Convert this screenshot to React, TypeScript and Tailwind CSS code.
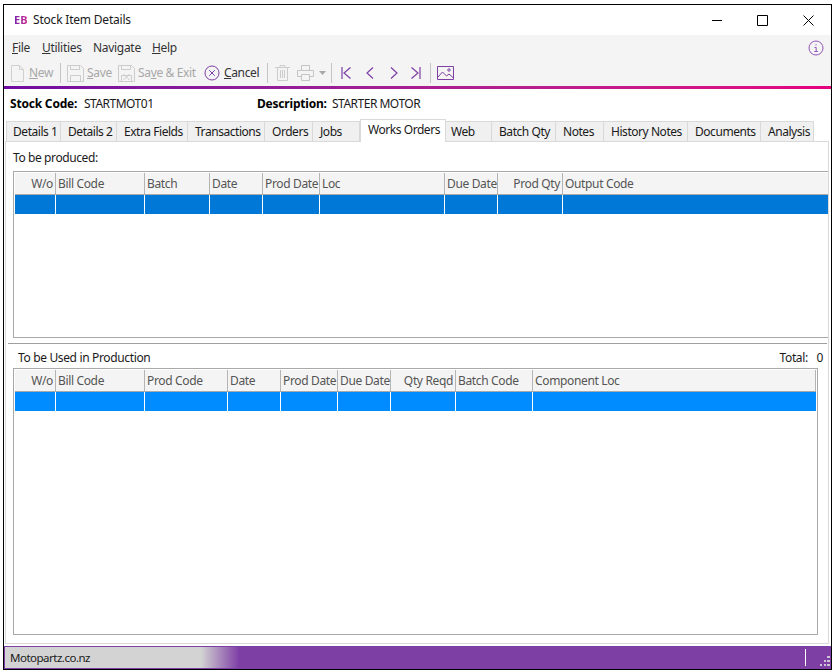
const FONT = "font-['Noto_Sans','Open_Sans',sans-serif]";

interface Col {
  label: string;
  w: string;
  right?: boolean;
}

const TOP_COLS: Col[] = [
  { label: "W/o", w: "w-[41px]", right: true },
  { label: "Bill Code", w: "w-[89px]" },
  { label: "Batch", w: "w-[65px]" },
  { label: "Date", w: "w-[53px]" },
  { label: "Prod Date", w: "w-[57px]" },
  { label: "Loc", w: "w-[125px]" },
  { label: "Due Date", w: "w-[53px]" },
  { label: "Prod Qty", w: "w-[65px]", right: true },
  { label: "Output Code", w: "flex-1 border-r-0!" },
];

const BOTTOM_COLS: Col[] = [
  { label: "W/o", w: "w-[41px]", right: true },
  { label: "Bill Code", w: "w-[89px]" },
  { label: "Prod Code", w: "w-[83px]" },
  { label: "Date", w: "w-[53px]" },
  { label: "Prod Date", w: "w-[57px]" },
  { label: "Due Date", w: "w-[53px]" },
  { label: "Qty Reqd", w: "w-[65px]", right: true },
  { label: "Batch Code", w: "w-[77px]" },
  { label: "Component Loc", w: "flex-1" },
];

const TABS = [
  { label: "Details 1", w: "w-[55px]" },
  { label: "Details 2", w: "w-[56px]" },
  { label: "Extra Fields", w: "w-[71px]" },
  { label: "Transactions", w: "w-[77px]" },
  { label: "Orders", w: "w-[48px]" },
  { label: "Jobs", w: "w-[47px]" },
  { label: "Works Orders", w: "w-[86px]", active: true },
  { label: "Web", w: "w-[46px] pl-[5px]!" },
  { label: "Batch Qty", w: "w-[64px]" },
  { label: "Notes", w: "w-[48px]" },
  { label: "History Notes", w: "w-[84px]" },
  { label: "Documents", w: "w-[73px]" },
  { label: "Analysis", w: "w-[53px]" },
];

function Grid({ cols, selected, size }: { cols: Col[]; selected: string; size: string }) {
  return (
    <div className={`${size} border border-[#a9a9a9] pt-px pl-px bg-white`}>
      <div className="flex h-[22px] bg-[#f4f4f4] border-b border-[#a9a9a9]">
        {cols.map((c) => (
          <div
            key={c.label}
            className={`${c.w} flex items-center pt-px px-[2px] border-r border-[#b4b4b4] whitespace-nowrap tracking-[-0.35px] text-[#555] ${c.right ? "justify-end" : ""}`}
          >
            {c.label}
          </div>
        ))}
      </div>
      <div className="flex h-[19px]">
        {cols.map((c) => (
          <div key={c.label} className={`${c.w} ${selected} border-r border-white last:border-r-0`} />
        ))}
      </div>
    </div>
  );
}

function Sep() {
  return <div className="w-px h-[20px] bg-[#c4c4c4]" />;
}

function PageIcon() {
  return (
    <svg width="14" height="17" viewBox="0 0 14 17" fill="none" stroke="#d0d0d0">
      <path d="M.5.5h8l4 4v12H.5z M8.5.5v4h4" />
    </svg>
  );
}

function SaveIcon({ cross }: { cross?: boolean }) {
  return (
    <svg width="17" height="17" viewBox="0 0 17 17" fill="none" stroke="#cccccc">
      <path d="M.5.5h13l3 3v13H.5z" />
      <path d="M3.5.5v4h9v-4" />
      <path d="M3.5 16.5v-6h10v6" />
      {cross && <path d="M5.5 9l6 6M11.5 9l-6 6" />}
    </svg>
  );
}

function NavIcon({ d }: { d: string }) {
  return (
    <svg width="11" height="12" viewBox="0 0 11 12" fill="none" stroke="#7e3fa5" strokeWidth="1.2">
      <path d={d} />
    </svg>
  );
}

export default function App() {
  return (
    <div className={`w-[833px] h-[672px] bg-white pl-[3px] pt-[4px] text-[12px] leading-[16px] text-[#1a1a1a] ${FONT}`}>
      <div className="w-[829px] h-[666px] border border-black flex flex-col bg-white">
        {/* title bar */}
        <div className="h-[30px] flex items-center shrink-0">
          <span className="ml-[10px] w-[19px] font-['Liberation_Sans',sans-serif] text-[11px] font-bold bg-linear-to-r from-[#7a1fb0] to-[#f0007e] bg-clip-text text-transparent">
            EB
          </span>
          <span className="tracking-[-0.2px]">Stock Item Details</span>
          <div className="ml-auto flex items-center">
            <svg width="11" height="11" viewBox="0 0 11 11" stroke="#000" fill="none">
              <path d="M0 5.5h10" />
            </svg>
            <svg className="ml-[34px]" width="11" height="11" viewBox="0 0 11 11" stroke="#000" fill="none">
              <path d="M.5.5h10v10H.5z" />
            </svg>
            <svg className="ml-[35px] mr-[17px]" width="11" height="11" viewBox="0 0 11 11" stroke="#000" fill="none">
              <path d="M.5.5l10 10M10.5.5l-10 10" />
            </svg>
          </div>
        </div>

        {/* menu bar */}
        <div className="h-[25px] bg-[#f4f4f4] flex items-center pl-[8px] shrink-0 text-[#333] tracking-[-0.3px]">
          <span className="w-[30px]"><u>F</u>ile</span>
          <span className="w-[51px]"><u>U</u>tilities</span>
          <span className="w-[59px]">Navigate</span>
          <span><u>H</u>elp</span>
          <svg className="ml-auto mr-[7px]" width="16" height="16" viewBox="0 0 16 16" fill="none" stroke="#9254b8">
            <circle cx="8" cy="8" r="7" />
            <path d="M6.5 7.5H8.2V11.5M6.3 11.5h3.6M8 4.2v1.3" />
          </svg>
        </div>

        {/* toolbar */}
        <div className="h-[26px] bg-[#f4f4f4] flex items-center pl-[7px] shrink-0 text-[#a8a8a8] tracking-[-0.35px]">
          <PageIcon />
          <span className="ml-[4px] w-[31px]"><u>N</u>ew</span>
          <Sep />
          <span className="ml-[6px]"><SaveIcon /></span>
          <span className="ml-[3px] w-[31px]"><u>S</u>ave</span>
          <SaveIcon cross />
          <span className="ml-[3px] w-[66px] whitespace-nowrap">Sa<u>v</u>e &amp; Exit</span>
          <svg width="16" height="16" viewBox="0 0 16 16" fill="none" stroke="#7e3fa5">
            <circle cx="8" cy="8" r="7" />
            <path d="M5.2 5.2l5.6 5.6M10.8 5.2l-5.6 5.6" />
          </svg>
          <span className="ml-[4px] w-[43px] text-[#333]"><u>C</u>ancel</span>
          <Sep />
          <svg className="ml-[7px]" width="15" height="16" viewBox="0 0 15 16" fill="none" stroke="#cccccc">
            <path d="M0 2.5h15M5 2.5V.5h5v2M2.5 2.5v13h10v-13M5.5 5v8M7.5 5v8M9.5 5v8" />
          </svg>
          <svg className="ml-[7px]" width="17" height="16" viewBox="0 0 17 16" fill="none" stroke="#c4c4c4">
            <path d="M4.5 5V.5h8V5M4 11.5H.5V5.5h16v6H13M4.5 9.5h8v6h-8z" />
          </svg>
          <svg className="ml-[5px]" width="7" height="4" viewBox="0 0 7 4" fill="#a8a8a8">
            <path d="M0 0h7L3.5 4z" />
          </svg>
          <span className="ml-[5px]"><Sep /></span>
          <span className="ml-[9px]"><NavIcon d="M1 0v12M9.5 .5L3 6l6.5 5.5" /></span>
          <span className="ml-[13px]"><NavIcon d="M8 .5L2 6l6 5.5" /></span>
          <span className="ml-[12px]"><NavIcon d="M3 .5L9 6l-6 5.5" /></span>
          <span className="ml-[11px]"><NavIcon d="M10 0v12M1.5 .5L8 6l-6.5 5.5" /></span>
          <span className="ml-[9px]"><Sep /></span>
          <svg className="ml-[6px]" width="17" height="14" viewBox="0 0 17 14" fill="none" stroke="#7e3fa5">
            <path d="M.5.5h16v13H.5z" />
            <path d="M1 11l4.5-5 4 4 2.5-2 4 3.5" />
            <circle cx="12" cy="4" r="1.2" />
          </svg>
        </div>

        <div className="h-[3px] shrink-0 bg-linear-to-r from-[#6f0aa0] to-[#e6007e]" />

        {/* stock header */}
        <div className="h-[30px] flex items-center pl-[6px] shrink-0 tracking-[-0.2px]">
          <span className="w-[74px] font-bold text-black">Stock Code:</span>
          <span className="w-[173px] tracking-[-0.5px]">STARTMOT01</span>
          <span className="w-[75px] font-bold text-black">Description:</span>
          <span className="tracking-[-0.5px]">STARTER MOTOR</span>
        </div>

        {/* tab strip */}
        <div className="h-[22px] flex items-end pl-[2px] shrink-0 relative z-10 tracking-[-0.45px]">
          {TABS.map((t) =>
            t.active ? (
              <div
                key={t.label}
                className={`${t.w} h-[23px] -mb-px bg-white border border-b-0 border-[#d9d9d9] flex items-start pl-[7px] pt-[2px] whitespace-nowrap`}
              >
                {t.label}
              </div>
            ) : (
              <div
                key={t.label}
                className={`${t.w} h-[20px] bg-[#f0f0f0] border border-l-0 first:border-l border-b-0 border-[#d9d9d9] flex items-center pl-[7px] first:pl-[6px] whitespace-nowrap`}
              >
                {t.label}
              </div>
            ),
          )}
        </div>

        {/* tab body */}
        <div className="ml-px w-[824px] h-[503px] border border-[#d9d9d9] flex flex-col shrink-0 pl-[7px]">
          <div className="h-[29px] flex items-center pt-[3px] tracking-[-0.4px]">To be produced:</div>
          <Grid cols={TOP_COLS} selected="bg-[#0078d7]" size="w-[815px] h-[167px] border-r-0" />
          <div className="h-px w-[819px] -ml-[5px] mt-[5px] bg-[#a0a0a0]" />
          <div className="h-[24px] flex items-center pl-[5px] pr-[5px] w-[815px] justify-between pt-[3px] tracking-[-0.35px]">
            <span>To be Used in Production</span>
            <span className="flex">
              <span className="w-[37px]">Total:</span>
              <span>0</span>
            </span>
          </div>
          <Grid cols={BOTTOM_COLS} selected="bg-[#008cff]" size="w-[805px] h-[267px] pr-px" />
        </div>

        {/* status bar */}
        <div className="mt-[2px] h-[23px] w-[827px] flex items-center border border-[#7e3fa5] border-r-0 bg-[linear-gradient(90deg,#d3d3d3_0,#d3d3d3_196px,#7e3fa5_234px)] pl-[5px] shrink-0">
          <span className="text-[11.5px] tracking-[-0.5px]">Motopartz.co.nz</span>
          <div className="ml-auto w-px h-[17px] bg-white" />
          <svg className="ml-[14px] mr-[1px] mt-[6px]" width="10" height="10" viewBox="0 0 10 10" fill="#cfc4d6">
            <path d="M7 0h3v2H7zM4 4h2v2H4zM7 4h3v2H7zM0 8h2v2H0zM4 8h2v2H4zM7 8h3v2H7z" />
          </svg>
        </div>
      </div>
    </div>
  );
}
